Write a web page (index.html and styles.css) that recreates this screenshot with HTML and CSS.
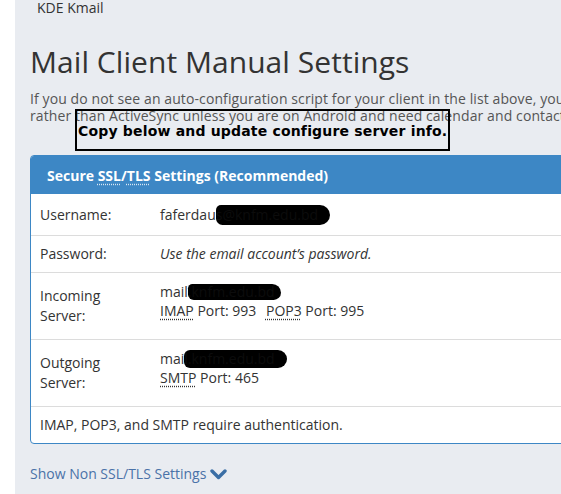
FILE: index.html
```html
<!DOCTYPE html>
<html lang="en">
<head>
<meta charset="utf-8">
<title>Mail Client Manual Settings</title>
<link rel="stylesheet" href="styles.css">
</head>
<body>
<div class="page">
  <div class="gutter"></div>
  <main class="main">
    <div class="prev-item">KDE Kmail</div>
    <h1 class="title">Mail Client Manual Settings</h1>
    <p class="intro">If you do not see an auto-configuration script for your client in the list above, you can manually configure your mail client using the settings below. We recommend IMAP<br>rather than ActiveSync unless you are on Android and need calendar and contacts synchronization.</p>
    <div class="note">Copy below and update configure server info.</div>

    <section class="panel">
      <div class="panel-head"><span>Secure <abbr class="ab">SSL</abbr>/<abbr class="ab">TLS</abbr> Settings (Recommended)</span></div>
      <div class="row row-user">
        <div class="label">Username:</div>
        <div class="value">faferdau<span class="redact r-user">s@knfm.edu.bd</span></div>
      </div>
      <div class="row row-pass">
        <div class="label">Password:</div>
        <div class="value"><em>Use the email account’s password.</em></div>
      </div>
      <div class="row row-server">
        <div class="label">Incoming<br>Server:</div>
        <div class="value lifted">
          <div>mail<span class="redact r-in">.knfm.edu.bd</span></div>
          <div><abbr class="ab">IMAP</abbr> Port: 993 <span class="gap"></span><abbr class="ab">POP3</abbr> Port: 995</div>
        </div>
      </div>
      <div class="row row-server">
        <div class="label">Outgoing<br>Server:</div>
        <div class="value lifted">
          <div>mai<span class="redact r-out">l.knfm.edu.bd</span></div>
          <div><abbr class="ab">SMTP</abbr> Port: 465</div>
        </div>
      </div>
      <div class="row row-auth">IMAP, POP3, and SMTP require authentication.</div>
    </section>

    <a class="toggle" href="#">Show Non SSL/TLS Settings <svg class="chev" width="17" height="11" viewBox="0 0 17 11"><polyline points="2,2 8.5,8.5 15,2" fill="none" stroke="#3a6ea5" stroke-width="3.4" stroke-linecap="round" stroke-linejoin="round"/></svg></a>
  </main>
</div>
</body>
</html>
```
FILE: styles.css
```css
html, body {
  margin: 0;
  padding: 0;
  background: #ffffff;
  overflow: hidden;
}
body {
  font-family: "Open Sans", "Liberation Sans", sans-serif;
  font-size: 14px;
  color: #333333;
}
.page {
  display: flex;
  width: 561px;
  height: 494px;
}
.gutter {
  width: 15px;
  flex: none;
  background: #ffffff;
}
.main {
  position: relative;
  flex: 1;
  background: #e9ecf1;
  padding-left: 15px;
  overflow: hidden;
}
.prev-item {
  padding-left: 7px;
  margin-top: -2px;
  line-height: 20px;
  color: #333;
}
.title {
  margin: 26px 0 0;
  font-size: 30px;
  font-weight: 400;
  line-height: 36px;
  color: #333;
  white-space: nowrap;
  letter-spacing: 0.05px;
}
.intro {
  margin: 10px 0 0;
  line-height: 17px;
  color: #555;
  white-space: nowrap;
  letter-spacing: 0.1px;
}
.note {
  position: absolute;
  left: 60px;
  top: 109px;
  box-sizing: border-box;
  height: 42px;
  width: 375px;
  border: 2px solid #000;
  padding: 12px 0 0 1px;
  font-family: "DejaVu Sans", Verdana, sans-serif;
  font-weight: bold;
  font-size: 14px;
  line-height: 17px;
  letter-spacing: 0.18px;
  color: #000;
  white-space: nowrap;
}
.panel {
  margin-top: 31px;
  width: 620px;
  border: 1px solid #3d87c5;
  border-radius: 4px;
  background: #fff;
  overflow: hidden;
}
.panel-head {
  height: 38px;
  display: flex;
  align-items: center;
  padding-left: 16px;
  background: #3d87c5;
  color: #fff;
  font-weight: 700;
  font-size: 14px;
}
.ab {
  text-decoration: underline dotted;
  text-underline-offset: 3px;
}
.panel-head .ab {
  text-decoration-color: rgba(255,255,255,0.8);
}
.row {
  display: flex;
  align-items: center;
  padding-left: 9px;
  line-height: 20px;
  border-top: 1px solid #dcdcdc;
}
.row-user {
  border-top: none;
  height: 41px;
}
.row-pass {
  height: 36px;
}
.row-server {
  height: 66px;
}
.row-auth {
  height: 36px;
}
.label {
  width: 120px;
  flex: none;
}
.value {
  flex: 1;
}
.value em {
  font-style: italic;
}
.lifted {
  line-height: 19px;
  margin-bottom: 10px;
}
.gap {
  display: inline-block;
  width: 6px;
}
.redact {
  display: inline-block;
  background: #000;
  color: #0c0c0c;
  line-height: 16px;
}
.r-user {
  padding: 2px 12px 2px 0;
  margin-top: -2px;
  border-radius: 7px 14px 14px 9px;
}
.r-in {
  padding: 0 6px 0 0;
  border-radius: 6px 12px 10px 8px;
}
.r-out {
  padding: 1px 12px 1px 0;
  border-radius: 8px 12px 12px 8px;
}
.toggle {
  display: inline-flex;
  align-items: center;
  margin-top: 20px;
  color: #4a72a8;
  text-decoration: none;
  line-height: 20px;
}
.chev {
  margin-left: 4px;
}
```
